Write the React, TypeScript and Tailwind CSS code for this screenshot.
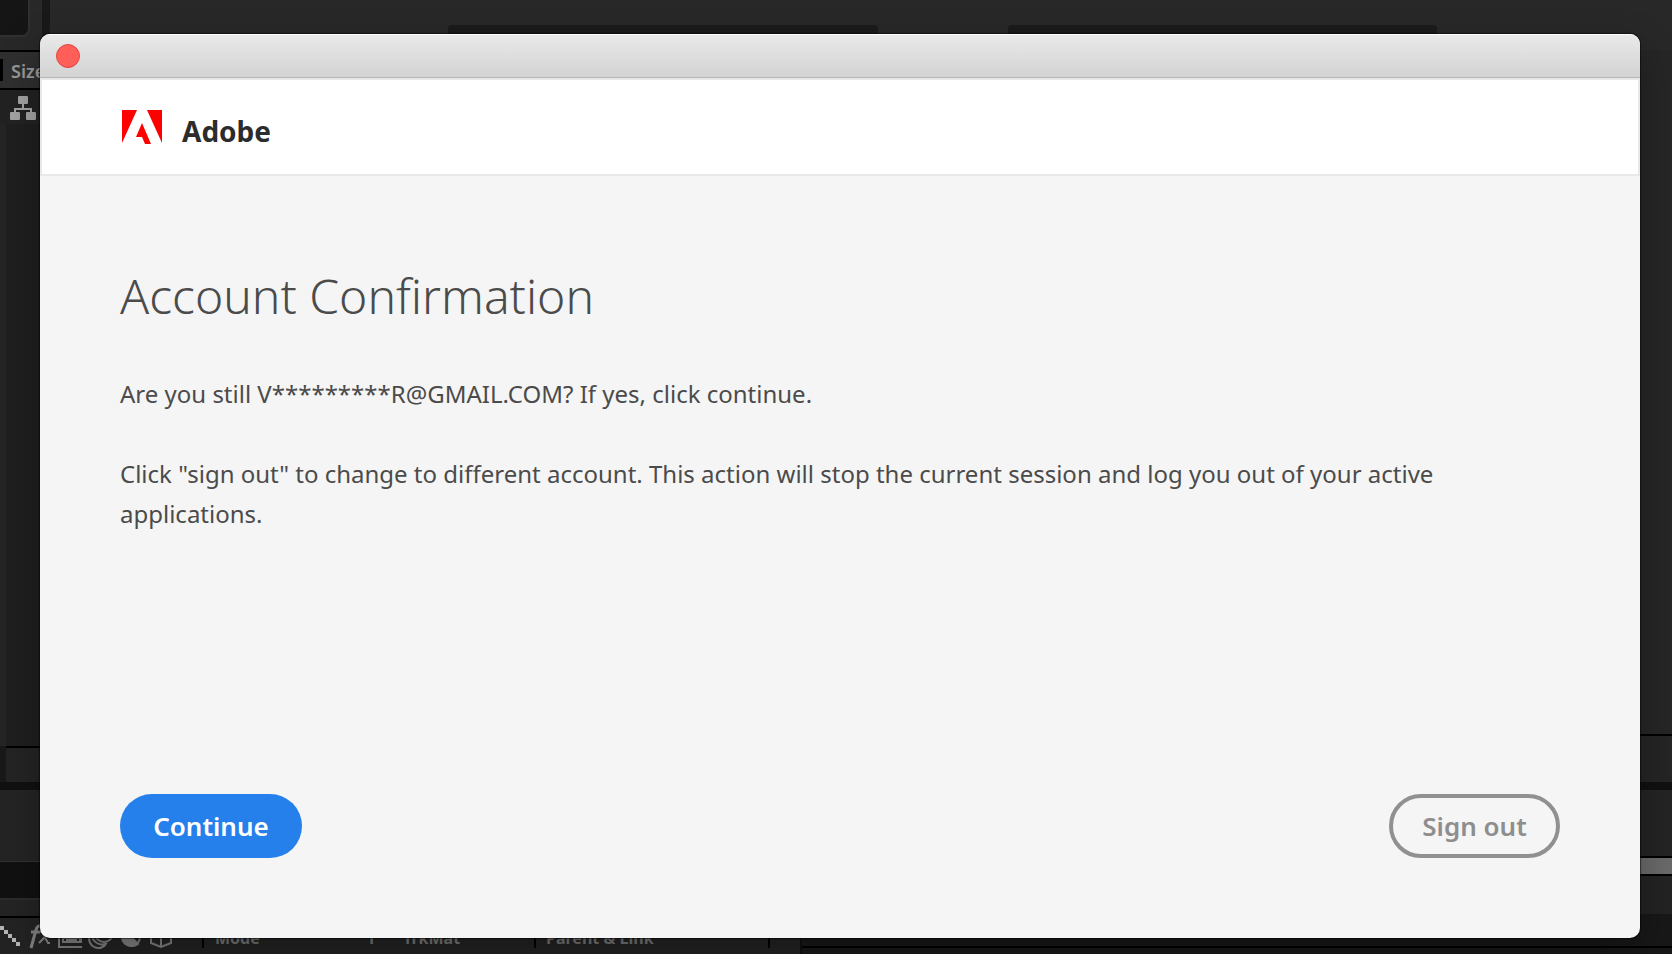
import { useState } from 'react';

function AdobeLogo() {
  return (
    <svg viewBox="0 0 40 34" className="h-[34px] w-10 shrink-0" fill="#ff0000" aria-hidden="true">
      <path d="M0 0h15L0 33z" />
      <path d="M25 0h15v33z" />
      <path d="M20 13l9 21h-6l-3-7h-6z" />
    </svg>
  );
}

function FlowchartIcon() {
  return (
    <svg viewBox="0 0 26 24" className="h-6 w-[26px]" fill="#a3a3a3" aria-hidden="true">
      <rect x="8" y="0" width="10" height="8" rx="1" />
      <path d="M12 8h2v4h8v4h-2v-2H6v2H4v-4h8z" />
      <rect x="0" y="16" width="10" height="8" rx="1" />
      <rect x="16" y="16" width="10" height="8" rx="1" />
    </svg>
  );
}

function SwitchIcons() {
  return (
    <svg viewBox="0 0 174 36" className="h-9 w-[174px]" fill="none" stroke="#828282" strokeWidth="2" aria-hidden="true">
      <path
        d="M0 8h4v4H0zM4 12h4v4H4zM8 16h4v4H8zM12 20h4v4h-4zM16 24h4v4h-4z"
        fill="#b5b5b5"
        stroke="none"
      />
      {/* fx */}
      <path d="M31 30l5-18q1-5 6-4M31 14h9" strokeWidth="3" />
      <path d="M40 14h2l6 11h2M50 14L39 25" />
      {/* frame blending */}
      <path d="M59 14v15h23" />
      <path
        fillRule="evenodd"
        d="M62 12h20v13H62zM64 21v2h2v-2zM77 21v2h2v-2zM64 13v6h15v-6z"
        fill="#828282"
        stroke="none"
      />
      {/* motion blur */}
      <circle cx="104" cy="15" r="9" />
      <path d="M92 16c0 8 8 13 15 9M89 18c-1 11 10 16 17 8" />
      {/* adjustment layer */}
      <path d="M124 12l14 14a10 10 0 0 1-14-14z" fill="#828282" />
      <circle cx="131" cy="19" r="9" />
      {/* 3D layer */}
      <path d="M151 13l10-5 10 5v12l-10 4-10-4zM151 13l10 4 10-4M161 17v12" />
    </svg>
  );
}

function Workspace() {
  return (
    <div className="flex min-h-screen flex-col overflow-hidden bg-[#222222] text-[#999999]" aria-hidden="true">
      <div className="flex h-[50px] items-start bg-[#282828]">
        <div className="h-[37px] w-[30px] rounded-br-lg border-r-2 border-b-2 border-[#303030] bg-[#151515]" />
        <div className="ml-3 h-full w-2 bg-[#191919]" />
        <div className="flex flex-1 gap-[130px] self-end pr-[235px] pl-[398px]">
          <div className="h-[25px] flex-1 rounded-t bg-[#1b1b1b]" />
          <div className="h-[25px] flex-1 rounded-t bg-[#1b1b1b]" />
        </div>
      </div>

      <div className="flex flex-1 justify-between">
        <div className="flex w-20 flex-col">
          <div className="flex h-10 items-center border-y-2 border-black bg-[#2f2f2f]">
            <div className="h-[22px] w-[3px] bg-black" />
            <span className="ml-2 pt-[2px] text-lg leading-6 font-semibold">Size</span>
          </div>
          <div className="h-[34px] bg-[#222222] pt-[6px] pl-[10px]">
            <FlowchartIcon />
          </div>
          <div className="flex-1 border-l-6 border-[#252525] bg-[#1f1f1f]" />
          <div className="h-9 border-l-6 border-[#191919]">
            <div className="h-full border-t-2 border-black bg-[#242424]" />
          </div>
        </div>
        <div className="flex w-20 flex-col bg-[#262626]">
          <div className="flex-1" />
          <div className="h-12 border-t-2 border-black bg-[#252525]" />
        </div>
      </div>

      <div className="h-2 bg-[#111111]" />

      <div className="flex h-[164px]">
        <div className="w-[800px]">
          <div className="h-[71px] bg-[#242424]" />
          <div className="h-[37px] border-t border-[#333333] bg-[#111111]" />
          <div className="h-[18px] border-t-2 border-[#2c2c2c] bg-[#242424]" />
          <div className="flex h-[38px] border-t-2 border-black bg-[#232323] text-base leading-10 font-bold text-[#747474]">
            <div className="w-[202px]">
              <SwitchIcons />
            </div>
            <div className="flex h-[30px] w-[332px] border-l-2 border-black pl-[11px]">
              <span className="w-[152px]">Mode</span>
              <span className="w-9">T</span>
              <span>TrkMat</span>
            </div>
            <div className="h-[30px] w-[236px] border-x-2 border-black pl-[10px]">Parent &amp; Link</div>
          </div>
        </div>
        <div className="flex flex-1 flex-col border-l-2 border-[#101010]">
          <div className="h-[66px] bg-[#242424]" />
          <div className="h-5 border-y-2 border-black bg-[#6a6a6a]" />
          <div className="h-[38px] bg-[#232323]" />
          <div className="h-8 bg-[#181818]" />
          <div className="flex-1 border-t-2 border-black bg-[#181818]" />
        </div>
      </div>
    </div>
  );
}

export default function App() {
  const [open, setOpen] = useState(true);

  return (
    <div className="relative overflow-hidden font-['Noto_Sans',sans-serif]">
      <Workspace />

      {open && (
        <section
          role="dialog"
          aria-labelledby="dialog-title"
          className="absolute top-[34px] right-8 bottom-4 left-10 flex flex-col overflow-hidden rounded-[10px] bg-[#f5f5f5] text-[#4b4b4b] shadow-[0_0_1px_1px_rgba(0,0,0,0.5),0_16px_40px_rgba(0,0,0,0.3)]"
        >
          <div className="flex h-11 shrink-0 items-center border-t border-b border-t-white border-b-[#b5b5b5] bg-linear-to-b from-[#e9e9e9] to-[#d3d3d3] pl-4">
            <button
              type="button"
              aria-label="Close"
              onClick={() => setOpen(false)}
              className="size-6 rounded-full border border-[#e2463f] bg-[#ff5f58]"
            />
          </div>

          <header className="flex h-[98px] shrink-0 items-center gap-5 border-2 border-[#e8e8e8] bg-white pl-20">
            <AdobeLogo />
            <span className="pt-2 text-[28px] leading-10 font-bold text-[#2c2c2c]">Adobe</span>
          </header>

          <main className="flex flex-1 flex-col px-20 pt-[84px] pb-20">
            <h1 id="dialog-title" className="text-5xl leading-[72px] font-light">
              Account Confirmation
            </h1>
            <p className="mt-[42px] text-2xl leading-10">
              Are you still V*********R@GMAIL.COM? If yes, click continue.
            </p>
            <p className="mt-10 text-2xl leading-10">
              Click "sign out" to change to different account. This action will stop the current session and log you
              out of your active applications.
            </p>

            <div className="mt-auto flex items-center justify-between text-[26px] leading-8 font-semibold">
              <button type="button" className="h-16 w-[182px] rounded-full bg-[#2680eb] text-white">
                Continue
              </button>
              <button
                type="button"
                className="h-16 w-[171px] rounded-full border-4 border-[#909090] text-[#8e8e8e]"
              >
                Sign out
              </button>
            </div>
          </main>
        </section>
      )}
    </div>
  );
}
